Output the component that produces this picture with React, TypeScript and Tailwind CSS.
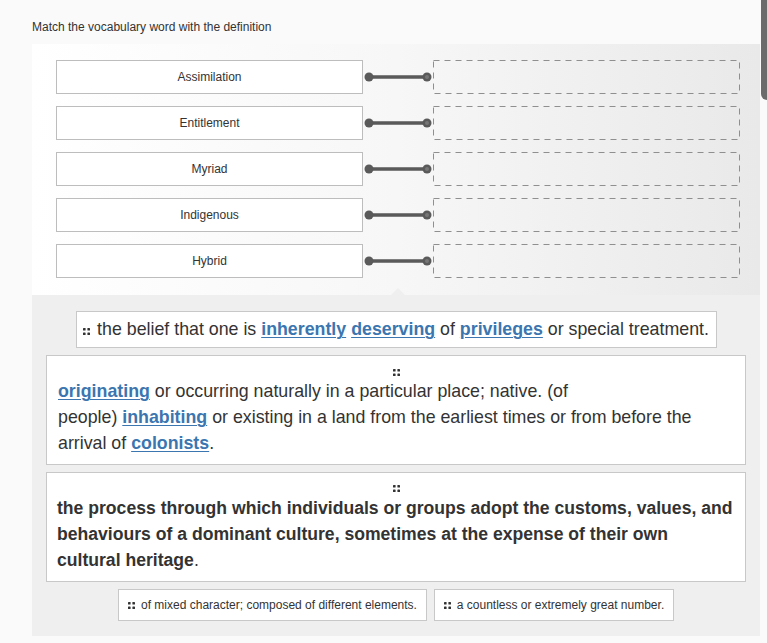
import React from 'react';

const WORDS = ['Assimilation', 'Entitlement', 'Myriad', 'Indigenous', 'Hybrid'];

type Part = { text: string; link?: boolean };

const Handle: React.FC<{ className?: string }> = ({ className }) => (
  <svg width="7" height="7" viewBox="0 0 7 7" className={className} fill="#333">
    <rect x="0" y="0" width="2.6" height="2.6" rx="0.6" />
    <rect x="4.4" y="0" width="2.6" height="2.6" rx="0.6" />
    <rect x="0" y="4.4" width="2.6" height="2.6" rx="0.6" />
    <rect x="4.4" y="4.4" width="2.6" height="2.6" rx="0.6" />
  </svg>
);

const Connector: React.FC = () => (
  <svg width="70" height="34" viewBox="0 0 70 34" className="shrink-0">
    <line x1="6" y1="17" x2="64" y2="17" stroke="#5a5a5a" strokeWidth="3.5" strokeLinecap="round" />
    <circle cx="6" cy="17" r="4.5" fill="#5a5a5a" />
    <circle cx="64" cy="17" r="4.5" fill="#5a5a5a" />
    <circle cx="64" cy="17" r="2" fill="#777" />
  </svg>
);

// empty drop slot with long dashes
const DropSlot: React.FC = () => (
  <svg width="307" height="34" viewBox="0 0 307 34" className="block shrink-0">
    <rect x="0.5" y="0.5" width="306" height="33" fill="none" stroke="#8f8f8f" strokeWidth="1" strokeDasharray="6 5" />
  </svg>
);

const Rich: React.FC<{ parts: Part[] }> = ({ parts }) => (
  <>
    {parts.map((p, i) =>
      p.link ? (
        <span key={i} className="font-bold text-[#3b76b0] underline underline-offset-2 decoration-[1px]">
          {p.text}
        </span>
      ) : (
        <span key={i}>{p.text}</span>
      )
    )}
  </>
);

export default function App() {
  return (
    <div
      className="relative min-h-[643px] w-[767px] overflow-hidden bg-[#fafafa] text-[#333]"
      style={{ fontFamily: '"Liberation Sans", Arial, sans-serif' }}
    >
      {/* scrollbar thumb */}
      <div className="absolute right-0 top-0 h-[100px] w-[6px] rounded-bl-[6px] bg-[#6b6b6b]" />

      <div className="pl-8 pt-[20px] text-[12px] leading-[15px]">Match the vocabulary word with the definition</div>

      <div className="ml-8 mt-[9px] w-[728px]">
        {/* matching rows */}
        <div className="relative flex flex-col gap-3 bg-gradient-to-r from-white via-[#f7f7f7] to-[#e9e9e9] pb-[17px] pl-6 pt-4">
          {WORDS.map((w) => (
            <div key={w} className="flex h-[34px] items-center">
              <div className="flex h-[34px] w-[307px] items-center justify-center border border-[#bdbdbd] bg-white text-[12px]">
                {w}
              </div>
              <Connector />
              <DropSlot />
            </div>
          ))}
          <div className="absolute bottom-[-1px] left-[358px] h-0 w-0 border-x-[8px] border-b-[8px] border-x-transparent border-b-[#efefef]" />
        </div>

        {/* answer pool */}
        <div className="flex flex-col items-center gap-[7px] bg-[#efefef] pb-[15px] pt-4 text-[17.8px]">
          <div className="flex h-[37px] w-[641px] items-center justify-center gap-[7px] border border-[#c8c8c8] bg-white">
            <Handle className="mt-[3px]" />
            <span>
              <Rich
                parts={[
                  { text: 'the belief that one is ' },
                  { text: 'inherently', link: true },
                  { text: ' ' },
                  { text: 'deserving', link: true },
                  { text: ' of ' },
                  { text: 'privileges', link: true },
                  { text: ' or special treatment.' },
                ]}
              />
            </span>
          </div>

          <div className="flex h-[110px] w-[700px] flex-col border border-[#c8c8c8] bg-white px-[11px] pt-[13px] leading-[26px]">
            <div className="flex h-[8px] justify-center">
              <Handle />
            </div>
            <div className="mt-[1px]">
              <Rich
                parts={[
                  { text: 'originating', link: true },
                  { text: ' or occurring naturally in a particular place; native. (of' },
                ]}
              />
              <br />
              <Rich
                parts={[
                  { text: 'people) ' },
                  { text: 'inhabiting', link: true },
                  { text: ' or existing in a land from the earliest times or from before the arrival of ' },
                  { text: 'colonists', link: true },
                  { text: '.' },
                ]}
              />
            </div>
          </div>

          <div className="flex h-[110px] w-[700px] flex-col border border-[#c8c8c8] bg-white px-[10px] pt-[12px] text-[17.6px] leading-[26px]">
            <div className="flex h-[8px] justify-center">
              <Handle />
            </div>
            <p className="mt-[2px]">
              <b>
                the process through which individuals or groups adopt the customs, values, and behaviours of a dominant
                culture, sometimes at the expense of their own
                <br />
                cultural heritage
              </b>
              .
            </p>
          </div>

          <div className="flex gap-[7px] text-[12px]">
            <div className="flex h-[32px] w-[309px] items-center justify-center gap-[6px] border border-[#c8c8c8] bg-white">
              <Handle />
              <span>of mixed character; composed of different elements.</span>
            </div>
            <div className="flex h-[32px] w-[240px] items-center justify-center gap-[6px] border border-[#c8c8c8] bg-white">
              <Handle />
              <span>a countless or extremely great number.</span>
            </div>
          </div>
        </div>
      </div>
    </div>
  );
}
